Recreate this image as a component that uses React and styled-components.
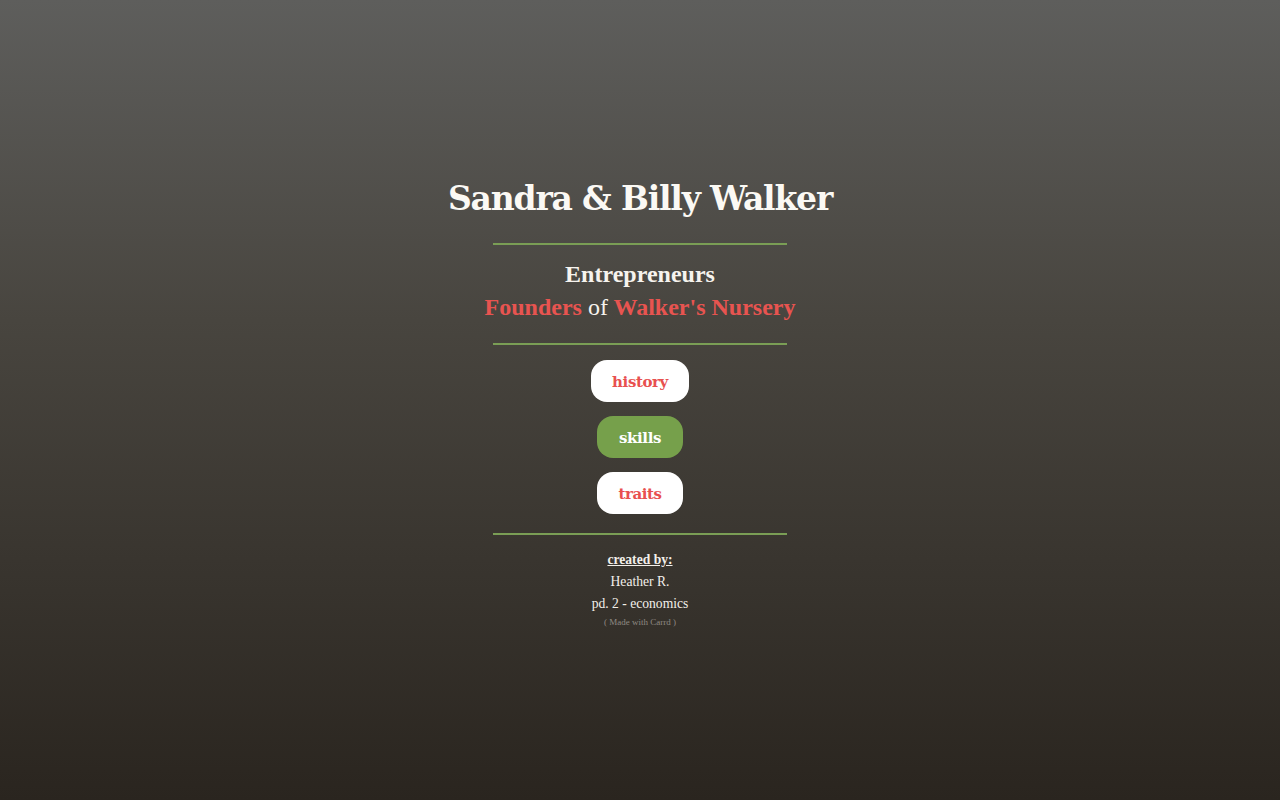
import React from "react";
import styled, { createGlobalStyle } from "styled-components";

const Global = createGlobalStyle`
  html, body { margin: 0; padding: 0; height: 100%; }
  body { background: #2b2621; }
  #root { min-height: 100vh; }
`;

const Page = styled.div`
  min-height: 800px;
  background: linear-gradient(to bottom, #5e5e5c 0%, #48453f 40%, #2a251f 100%);
  display: flex;
  justify-content: center;
  align-items: flex-start;
  font-family: "Liberation Serif", "DejaVu Serif", serif;
  color: #ffffff;
`;

const Column = styled.main`
  display: flex;
  flex-direction: column;
  align-items: center;
  padding-top: 175px;
  width: 420px;
`;

const Title = styled.h1`
  margin: 0;
  font-family: "DejaVu Serif", serif;
  font-weight: 700;
  font-size: 33px;
  line-height: 48px;
  letter-spacing: -1.2px;
  color: #fbf9f4;
  white-space: nowrap;
`;

const Rule = styled.hr`
  width: 294px;
  height: 2px;
  border: 0;
  margin: ${(p) => p.$m || "0"};
  background: #7a9e55;
`;

const Role = styled.div`
  font-family: "Liberation Serif", serif;
  font-weight: 700;
  font-size: 24px;
  line-height: 33px;
  color: #f6f3ee;
  white-space: nowrap;
`;

const Accent = styled.span`
  color: #e85450;
`;

const Plain = styled.span`
  font-weight: 400;
  color: #f6f3ee;
`;

const Buttons = styled.nav`
  display: flex;
  flex-direction: column;
  align-items: center;
  gap: 14px;
`;

const Pill = styled.a`
  display: flex;
  align-items: center;
  justify-content: center;
  box-sizing: border-box;
  width: ${(p) => p.$w}px;
  height: 42px;
  border-radius: 16px;
  background: ${(p) => (p.$green ? "#76a04b" : "#ffffff")};
  color: ${(p) => (p.$green ? "#ffffff" : "#e8504f")};
  font-family: "DejaVu Serif", serif;
  font-weight: 700;
  font-size: 15px;
  letter-spacing: -0.4px;
  text-decoration: none;
  padding-top: 2px;
`;

const Credits = styled.footer`
  display: flex;
  flex-direction: column;
  align-items: center;
  font-family: "Liberation Serif", serif;
  font-size: 13.6px;
  color: #f2efea;
`;

const CreditLine = styled.div`
  line-height: 22px;
  ${(p) => p.$head && "font-weight: 700; text-decoration: underline;"}
`;

const Carrd = styled.div`
  font-size: 9px;
  line-height: 14px;
  color: #8f8a83;
`;

export default function App() {
  return (
    <>
      <Global />
      <Page>
        <Column>
          <Title>Sandra &amp; Billy Walker</Title>
          <Rule $m="20px 0 13px" />
          <Role>Entrepreneurs</Role>
          <Role>
            <Accent>Founders</Accent> <Plain>of</Plain> <Accent>Walker's Nursery</Accent>
          </Role>
          <Rule $m="19px 0 15px" />
          <Buttons>
            <Pill href="#" $w={98}>history</Pill>
            <Pill href="#" $w={86} $green>skills</Pill>
            <Pill href="#" $w={86}>traits</Pill>
          </Buttons>
          <Rule $m="19px 0 14px" />
          <Credits>
            <CreditLine $head>created by:</CreditLine>
            <CreditLine>Heather R.</CreditLine>
            <CreditLine>pd. 2 - economics</CreditLine>
            <Carrd>( Made with Carrd )</Carrd>
          </Credits>
        </Column>
      </Page>
    </>
  );
}
